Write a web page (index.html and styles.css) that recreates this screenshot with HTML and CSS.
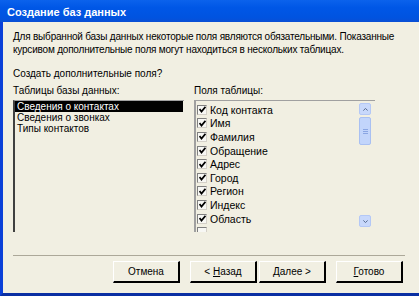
FILE: index.html
```html
<!DOCTYPE html>
<html lang="ru">
<head>
    <meta charset="UTF-8">
    <title>Создание баз данных</title>
    <link rel="stylesheet" href="styles.css">
</head>
<body>
    <div class="window">
        <div class="titlebar">Создание баз данных</div>

        <div class="content">
            <p class="intro">Для выбранной базы данных некоторые поля являются обязательными. Показанные<br>курсивом дополнительные поля могут находиться в нескольких таблицах.</p>

            <p class="question">Создать дополнительные поля?</p>

            <div class="lists">
                <div class="column left-col">
                    <div class="label">Таблицы базы данных:</div>
                    <div class="listbox tables">
                        <div class="row selected">Сведения о контактах</div>
                        <div class="row">Сведения о звонках</div>
                        <div class="row">Типы контактов</div>
                    </div>
                </div>

                <div class="column right-col">
                    <div class="label">Поля таблицы:</div>
                    <div class="listbox fields">
                        <div class="field-rows">
                            <div class="field"><span class="check"><svg viewBox="0 0 7 7"><path d="M0.5 3 L2.5 5.5 L6.5 0.8" /></svg></span>Код контакта</div>
                            <div class="field"><span class="check"><svg viewBox="0 0 7 7"><path d="M0.5 3 L2.5 5.5 L6.5 0.8" /></svg></span>Имя</div>
                            <div class="field"><span class="check"><svg viewBox="0 0 7 7"><path d="M0.5 3 L2.5 5.5 L6.5 0.8" /></svg></span>Фамилия</div>
                            <div class="field"><span class="check"><svg viewBox="0 0 7 7"><path d="M0.5 3 L2.5 5.5 L6.5 0.8" /></svg></span>Обращение</div>
                            <div class="field"><span class="check"><svg viewBox="0 0 7 7"><path d="M0.5 3 L2.5 5.5 L6.5 0.8" /></svg></span>Адрес</div>
                            <div class="field"><span class="check"><svg viewBox="0 0 7 7"><path d="M0.5 3 L2.5 5.5 L6.5 0.8" /></svg></span>Город</div>
                            <div class="field"><span class="check"><svg viewBox="0 0 7 7"><path d="M0.5 3 L2.5 5.5 L6.5 0.8" /></svg></span>Регион</div>
                            <div class="field"><span class="check"><svg viewBox="0 0 7 7"><path d="M0.5 3 L2.5 5.5 L6.5 0.8" /></svg></span>Индекс</div>
                            <div class="field"><span class="check"><svg viewBox="0 0 7 7"><path d="M0.5 3 L2.5 5.5 L6.5 0.8" /></svg></span>Область</div>
                            <div class="field"><span class="check"></span></div>
                        </div>
                        <div class="scrollbar">
                            <div class="sb-btn"><svg viewBox="0 0 7 4"><path d="M0.5 3.5 L3.5 0.5 L6.5 3.5" /></svg></div>
                            <div class="sb-thumb"><span></span><span></span><span></span></div>
                            <div class="sb-track"></div>
                            <div class="sb-btn"><svg viewBox="0 0 7 4"><path d="M0.5 0.5 L3.5 3.5 L6.5 0.5" /></svg></div>
                        </div>
                    </div>
                </div>
            </div>

            <div class="separator"></div>

            <div class="buttons">
                <button class="btn">Отмена</button>
                <div class="nav">
                    <button class="btn">&lt; <u>Н</u>азад</button>
                    <button class="btn"><u>Д</u>алее &gt;</button>
                </div>
                <button class="btn"><u>Г</u>отово</button>
            </div>
        </div>
    </div>
</body>
</html>
```

FILE: styles.css
```css
body {
    margin: 0;
    width: 419px;
    height: 296px;
    overflow: hidden;
    font-family: 'Liberation Sans', Arial, sans-serif;
    font-size: 10px;
    color: #000;
    background: #f1efe2;
}

.window {
    height: 296px;
    display: flex;
    flex-direction: column;
}

.titlebar {
    height: 22px;
    line-height: 24px;
    padding-left: 7px;
    color: #fff;
    font-size: 11px;
    font-weight: bold;
    background: linear-gradient(180deg, #0b62ec 0%, #0057e6 35%, #0053e0 80%, #0a4fd4 100%);
}

.content {
    flex: 1;
    border-left: 3px solid #0a40d8;
    border-bottom: 3px solid #0a2fa3;
    padding: 8px 14px 0 10px;
}

.intro {
    margin: 0;
    line-height: 13px;
    white-space: nowrap;
    letter-spacing: -0.2px;
}

.question {
    margin: 11px 0 0;
    line-height: 13px;
}

.lists {
    display: flex;
    gap: 10px;
    margin-top: 4px;
}

.label {
    height: 16px;
    line-height: 13px;
}

.listbox {
    height: 132px;
    border-top: 1px solid #a0a0a0;
    border-left: 1px solid #808080;
    box-sizing: border-box;
}

.tables {
    width: 171px;
    border-left: 2px solid #404040;
}

.row {
    height: 11px;
    line-height: 11px;
    padding-left: 2px;
    margin-right: 1px;
}

.row.selected {
    background: #000;
    color: #fff;
}

.fields {
    width: 181px;
    display: flex;
    border-left: 2px solid #a0a0a0;
}

.field-rows {
    flex: 1;
    padding-top: 2px;
    overflow: hidden;
}

.field {
    display: flex;
    align-items: center;
    height: 13.6px;
    font-size: 10.5px;
}

.check {
    width: 8px;
    height: 8px;
    margin: 0 3px 0 1px;
    border-top: 1px solid #808080;
    border-left: 1px solid #808080;
    border-right: 1px solid #d4d0c8;
    border-bottom: 1px solid #d4d0c8;
    background: #f7f7f4;
    display: flex;
    align-items: center;
    justify-content: center;
}

.check svg {
    width: 7px;
    height: 7px;
    fill: none;
    stroke: #000;
    stroke-width: 1.8;
}

.scrollbar {
    width: 12px;
    margin: 2px 4px 0 0;
    display: flex;
    flex-direction: column;
}

.sb-btn {
    height: 12px;
    background: #c8d8fb;
    border: 1px solid #b4c8f6;
    border-radius: 2px;
    box-sizing: border-box;
    display: flex;
    align-items: center;
    justify-content: center;
}

.sb-btn svg {
    width: 5px;
    height: 3px;
    fill: none;
    stroke: #4d6185;
    stroke-width: 1.3;
}

.sb-thumb {
    height: 28px;
    margin-top: 2px;
    background: #c2d5fb;
    border: 1px solid #a9c0f2;
    border-radius: 2px;
    box-sizing: border-box;
    display: flex;
    flex-direction: column;
    align-items: center;
    justify-content: center;
    gap: 1px;
}

.sb-thumb span {
    width: 5px;
    height: 1px;
    background: #8aa6e3;
}

.sb-track {
    flex: 1;
    max-height: 70px;
}

.separator {
    height: 1px;
    background: #aca899;
    margin-top: 23px;
    width: 392px;
}

.buttons {
    display: flex;
    margin-top: 5px;
    width: 390px;
    justify-content: flex-end;
}

.nav {
    display: flex;
    gap: 2px;
    margin: 0 10px;
}

.btn {
    height: 22px;
    width: 67px;
    padding: 0;
    font-family: 'Liberation Sans', Arial, sans-serif;
    font-size: 10px;
    color: #000;
    background: #f1efe2;
    border: none;
    border-right: 2px solid #000;
    border-bottom: 2px solid #000;
    border-top: 1px solid #fff;
    border-left: 1px solid #fff;
}
```
